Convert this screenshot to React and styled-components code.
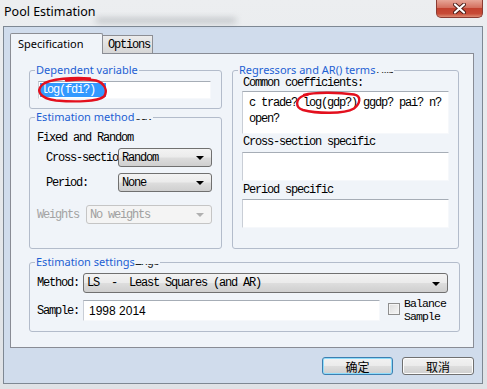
import React from "react";
import styled, { createGlobalStyle } from "styled-components";

const mono = `"Liberation Mono", "DejaVu Sans Mono", monospace`;
const ui = `"Noto Sans", "Open Sans", sans-serif`;
const cjk = `"Liberation Sans", "Noto Sans CJK SC", sans-serif`;

const GlobalStyle = createGlobalStyle`
  html, body {
    margin: 0;
    padding: 0;
  }
  body {
    width: 487px;
    height: 389px;
    overflow: hidden;
    background: linear-gradient(#eceef0, #dfe2e6);
  }
`;

const App = () => {
  return (
    <>
      <GlobalStyle />
      <Window>
        <TitleBar>
          <Title>Pool Estimation</Title>
          <GlassSmear />
          <Spacer />
          <CloseButton>
            <svg width="13" height="11" viewBox="0 0 13 11">
              <path d="M2 1.5 L11 9.5 M11 1.5 L2 9.5" stroke="#4a1c16" strokeWidth="4" strokeLinecap="round" />
              <path d="M2 1.5 L11 9.5 M11 1.5 L2 9.5" stroke="#fff" strokeWidth="2.2" strokeLinecap="round" />
            </svg>
          </CloseButton>
        </TitleBar>

        <Client>
          <TabRow>
            <ActiveTab>Specification</ActiveTab>
            <Tab>Options</Tab>
          </TabRow>

          <Panel>
            <TopGrid>
              <Column>
                <Group $h={46} $pl={8} $pr={8} $pt={4}>
                  <Legend $shift={-3}>Dependent variable</Legend>
                  <TextBox $w={173} $h={18}>
                    <Selected>log(fdi?)</Selected>
                    <Scribble width="72" height="26" viewBox="0 0 72 26" style={{ left: -3, top: -5 }}>
                      <path
                        d="M54 1.5 C40 0.5, 13 1, 6 8 C0.5 13.5, 3 21.5, 20 23.5 C38 25, 62 25, 68 19.5 C72 14, 69 6, 60 3.5 C52 2, 40 2.5, 30 3.5"
                        fill="none"
                        stroke="#e3101e"
                        strokeWidth="2.4"
                        strokeLinecap="round"
                      />
                    </Scribble>
                  </TextBox>
                </Group>

                <Group $h={139} $pl={7} $pr={8} $pt={4}>
                  <Legend $shift={-2}>
                    Estimation method<Ghost>od:</Ghost>
                  </Legend>
                  <Row $h={18} $mt={1}>
                    <Label>Fixed and Random</Label>
                  </Row>
                  <Row $h={19} $mt={1}>
                    <Label $w={81} $indent={9}>Cross-sectio</Label>
                    <Combo $w={94}>
                      <ComboText>Random</ComboText>
                      <Arrow />
                    </Combo>
                  </Row>
                  <Row $h={19} $mt={6}>
                    <Label $w={81} $indent={9}>Period:</Label>
                    <Combo $w={94}>
                      <ComboText>None</ComboText>
                      <Arrow />
                    </Combo>
                  </Row>
                  <Row $h={19} $mt={13}>
                    <Label $w={49} $disabled>Weights</Label>
                    <Combo $w={126} $disabled>
                      <ComboText>No weights</ComboText>
                      <Arrow $disabled />
                    </Combo>
                  </Row>
                </Group>
              </Column>

              <Group $h={186} $pl={9} $pr={9} $pt={0}>
                <Legend $shift={-4}>
                  Regressors and AR() terms<Ghost>rms</Ghost>
                </Legend>
                <Caption>Common coefficients:</Caption>
                <TextBox $h={43} $mt={2} $multi>
                  <span>c trade? log(gdp?) ggdp? pai? n?</span>
                  <span>open?</span>
                  <Scribble width="72" height="28" viewBox="0 0 72 28" style={{ left: 49, top: -3 }}>
                    <path
                      d="M12 6 C22 3, 46 3, 62 5.5 C70 7, 68 15, 62 19.5 C52 25.5, 24 24.5, 11 21 C3 18.5, 3 10, 12 6.5 L16 5.5"
                      fill="none"
                      stroke="#e3101e"
                      strokeWidth="2.4"
                      strokeLinecap="round"
                    />
                  </Scribble>
                </TextBox>
                <Caption $mt={2}>Cross-section specific</Caption>
                <TextBox $h={29} $mt={4} />
                <Caption $mt={3}>Period specific</Caption>
                <TextBox $h={29} $mt={3} />
              </Group>
            </TopGrid>

            <Group $h={77} $w={431} $pl={7} $pr={11} $pt={4}>
              <Legend $shift={-2}>
                Estimation settings<Ghost>ings</Ghost>
              </Legend>
              <Row $h={20}>
                <Label $w={46}>Method:</Label>
                <Combo $grow>
                  <ComboText>LS&nbsp;&nbsp;-&nbsp;&nbsp;Least Squares (and AR)</ComboText>
                  <Arrow />
                </Combo>
              </Row>
              <Row $h={21} $mt={7}>
                <Label $w={46}>Sample:</Label>
                <TextBox $w={297} $h={21} $sans>
                  1998 2014
                </TextBox>
                <CheckGroup>
                  <CheckBox />
                  <CheckLabel>
                    <span>Balance</span>
                    <span>Sample</span>
                  </CheckLabel>
                </CheckGroup>
              </Row>
            </Group>
          </Panel>

          <ButtonRow>
            <Button $default $w={71}>确定</Button>
            <Button $w={72}>取消</Button>
          </ButtonRow>
        </Client>
      </Window>
    </>
  );
};

export default App;

/* styles */

const Window = styled.div`
  width: 487px;
  height: 389px;
  display: flex;
  flex-direction: column;
`;

const TitleBar = styled.div`
  height: 26px;
  display: flex;
  align-items: flex-start;
`;

const Title = styled.div`
  font-family: ${ui};
  font-size: 12.5px;
  line-height: 24px;
  padding-left: 4px;
  color: #000;
  white-space: nowrap;
`;

const GlassSmear = styled.div`
  width: 140px;
  height: 5px;
  margin: 18px 0 0 0;
  background: rgba(110, 115, 120, 0.35);
  filter: blur(3px);
`;

const Spacer = styled.div`
  flex: 1;
`;

const CloseButton = styled.div`
  width: 47px;
  height: 18px;
  box-sizing: border-box;
  margin-right: 4px;
  border: 1px solid #8b3b32;
  border-top: none;
  border-radius: 0 0 5px 5px;
  background: linear-gradient(#e7a597 0%, #d4705f 45%, #c2412f 50%, #c74a36 80%, #dc8a72 100%);
  display: flex;
  align-items: center;
  justify-content: center;
`;

const Client = styled.div`
  width: 480px;
  height: 358px;
  margin-left: 3px;
  box-sizing: border-box;
  border: 1px solid #7e8893;
  background: #d0dcec;
  padding: 6px 0 0 6px;
  display: flex;
  flex-direction: column;
`;

const TabRow = styled.div`
  width: 464px;
  height: 21px;
  display: flex;
  align-items: flex-end;
  margin-bottom: -1px;
  position: relative;
  z-index: 1;
`;

const ActiveTab = styled.div`
  width: 93px;
  height: 21px;
  box-sizing: border-box;
  border: 1px solid #8c8e94;
  border-bottom: none;
  border-radius: 2px 2px 0 0;
  background: #f0f4f9;
  font-family: ${ui};
  font-size: 11px;
  line-height: 20px;
  padding-left: 7px;
  color: #000;
`;

const Tab = styled.div`
  width: 50px;
  height: 18px;
  box-sizing: border-box;
  margin-bottom: 1px;
  border: 1px solid #8c8e94;
  border-left: none;
  border-bottom: none;
  background: linear-gradient(#ececec, #d6d6d6);
  font-family: ${mono};
  font-size: 12px;
  letter-spacing: -1.2px;
  line-height: 18px;
  padding-left: 5px;
  color: #000;
`;

const Panel = styled.div`
  width: 464px;
  height: 295px;
  box-sizing: border-box;
  border: 1px solid #898c95;
  background: #f0f4f9;
  padding: 9px 0 0 18px;
  display: flex;
  flex-direction: column;
  gap: 6px;
`;

const TopGrid = styled.div`
  display: grid;
  grid-template-columns: 193px 227px;
  column-gap: 10px;
  height: 186px;
`;

const Column = styled.div`
  display: flex;
  flex-direction: column;
  gap: 1px;
`;

const Group = styled.fieldset`
  margin: 0;
  min-width: 0;
  box-sizing: border-box;
  height: ${(p) => p.$h}px;
  width: ${(p) => (p.$w ? `${p.$w}px` : "auto")};
  padding: ${(p) => p.$pt}px ${(p) => p.$pr}px 0 ${(p) => p.$pl}px;
  border: 1px solid #b3bccb;
  border-radius: 3px;
  display: flex;
  flex-direction: column;
`;

const Legend = styled.legend`
  font-family: ${ui};
  font-size: 11px;
  line-height: 14px;
  color: #1d5fd3;
  padding: 0 1px;
  margin-left: ${(p) => p.$shift}px;
  white-space: nowrap;
`;

const Ghost = styled.span`
  display: inline-block;
  font-family: ${mono};
  font-size: 12px;
  letter-spacing: -1.2px;
  line-height: 14px;
  color: #222;
  vertical-align: top;
  clip-path: inset(9px 0 0 0);
`;

const Row = styled.div`
  display: flex;
  align-items: center;
  height: ${(p) => p.$h}px;
  margin-top: ${(p) => p.$mt || 0}px;
`;

const Label = styled.div`
  font-family: ${mono};
  font-size: 12px;
  letter-spacing: -1.2px;
  color: ${(p) => (p.$disabled ? "#a3a3a3" : "#000")};
  width: ${(p) => (p.$w ? `${p.$w - (p.$indent || 0)}px` : "auto")};
  margin-left: ${(p) => p.$indent || 0}px;
  flex-shrink: 0;
  white-space: nowrap;
`;

const Caption = styled.div`
  font-family: ${mono};
  font-size: 12px;
  letter-spacing: -1.2px;
  line-height: 12px;
  height: 12px;
  padding-left: 1px;
  margin-top: ${(p) => p.$mt || 0}px;
  color: #000;
  white-space: nowrap;
`;

const TextBox = styled.div`
  position: relative;
  box-sizing: border-box;
  width: ${(p) => (p.$w ? `${p.$w}px` : "auto")};
  height: ${(p) => p.$h}px;
  flex-shrink: 0;
  margin-top: ${(p) => p.$mt || 0}px;
  background: #fff;
  border: 1px solid;
  border-color: #a6adb6 #f6f8fb #f6f8fb #c9ced6;
  display: flex;
  flex-direction: ${(p) => (p.$multi ? "column" : "row")};
  align-items: ${(p) => (p.$multi ? "flex-start" : "center")};
  padding: ${(p) => (p.$multi ? "3px 0 0 6px" : p.$sans ? "0 0 0 5px" : "0 0 0 1px")};
  font-family: ${(p) => (p.$sans ? `"Liberation Sans", sans-serif` : mono)};
  font-size: 12px;
  letter-spacing: ${(p) => (p.$sans ? "0" : "-1.2px")};
  line-height: 16px;
  color: #000;
  white-space: nowrap;
`;

const Selected = styled.span`
  background: #3399ff;
  color: #fff;
  line-height: 14px;
  padding: 0 11px 0 1px;
`;

const Scribble = styled.svg`
  position: absolute;
  pointer-events: none;
  overflow: visible;
`;

const Combo = styled.div`
  box-sizing: border-box;
  height: 100%;
  width: ${(p) => (p.$w ? `${p.$w}px` : "auto")};
  flex: ${(p) => (p.$grow ? 1 : "none")};
  border: 1px solid ${(p) => (p.$disabled ? "#c5c5c5" : "#707070")};
  border-radius: 3px;
  background: ${(p) =>
    p.$disabled
      ? "#f4f4f4"
      : "linear-gradient(#f3f3f3 0%, #ebebeb 48%, #dddddd 52%, #cfcfcf 100%)"};
  display: flex;
  align-items: center;
  padding: 0 7px 0 3px;
  font-family: ${mono};
  font-size: 12px;
  letter-spacing: -1.2px;
  color: ${(p) => (p.$disabled ? "#a0a0a0" : "#000")};
`;

const ComboText = styled.span`
  flex: 1;
  white-space: nowrap;
  overflow: hidden;
`;

const Arrow = styled.span`
  width: 0;
  height: 0;
  border-left: 4px solid transparent;
  border-right: 4px solid transparent;
  border-top: 4px solid ${(p) => (p.$disabled ? "#b0b0b0" : "#000")};
  margin-top: 1px;
`;

const CheckGroup = styled.div`
  display: flex;
  align-items: flex-start;
  gap: 4px;
  margin-left: 8px;
  align-self: flex-start;
  margin-top: -3px;
`;

const CheckBox = styled.div`
  width: 12px;
  height: 12px;
  box-sizing: border-box;
  margin-top: 6px;
  border: 1px solid #8f8f8f;
  background: linear-gradient(135deg, #dcdcdc, #f6f6f6);
  box-shadow: inset 0 0 0 1px #f4f4f4;
`;

const CheckLabel = styled.div`
  display: flex;
  flex-direction: column;
  font-family: ${mono};
  font-size: 11.5px;
  letter-spacing: -0.9px;
  line-height: 13px;
  color: #000;
`;

const ButtonRow = styled.div`
  width: 464px;
  display: flex;
  justify-content: flex-end;
  gap: 9px;
  margin-top: 9px;
`;

const Button = styled.div`
  width: ${(p) => p.$w}px;
  height: 18px;
  box-sizing: border-box;
  border: 1px solid ${(p) => (p.$default ? "#3c7fb1" : "#707070")};
  border-radius: 3px;
  background: linear-gradient(#f2f2f2 0%, #ebebeb 48%, #dddddd 52%, #cfcfcf 100%);
  box-shadow: ${(p) => (p.$default ? "inset 0 0 0 1px #8fdcfa" : "inset 0 0 0 1px #fcfcfc")};
  display: flex;
  align-items: center;
  justify-content: center;
  font-family: ${cjk};
  font-size: 12px;
  color: #000;
`;
